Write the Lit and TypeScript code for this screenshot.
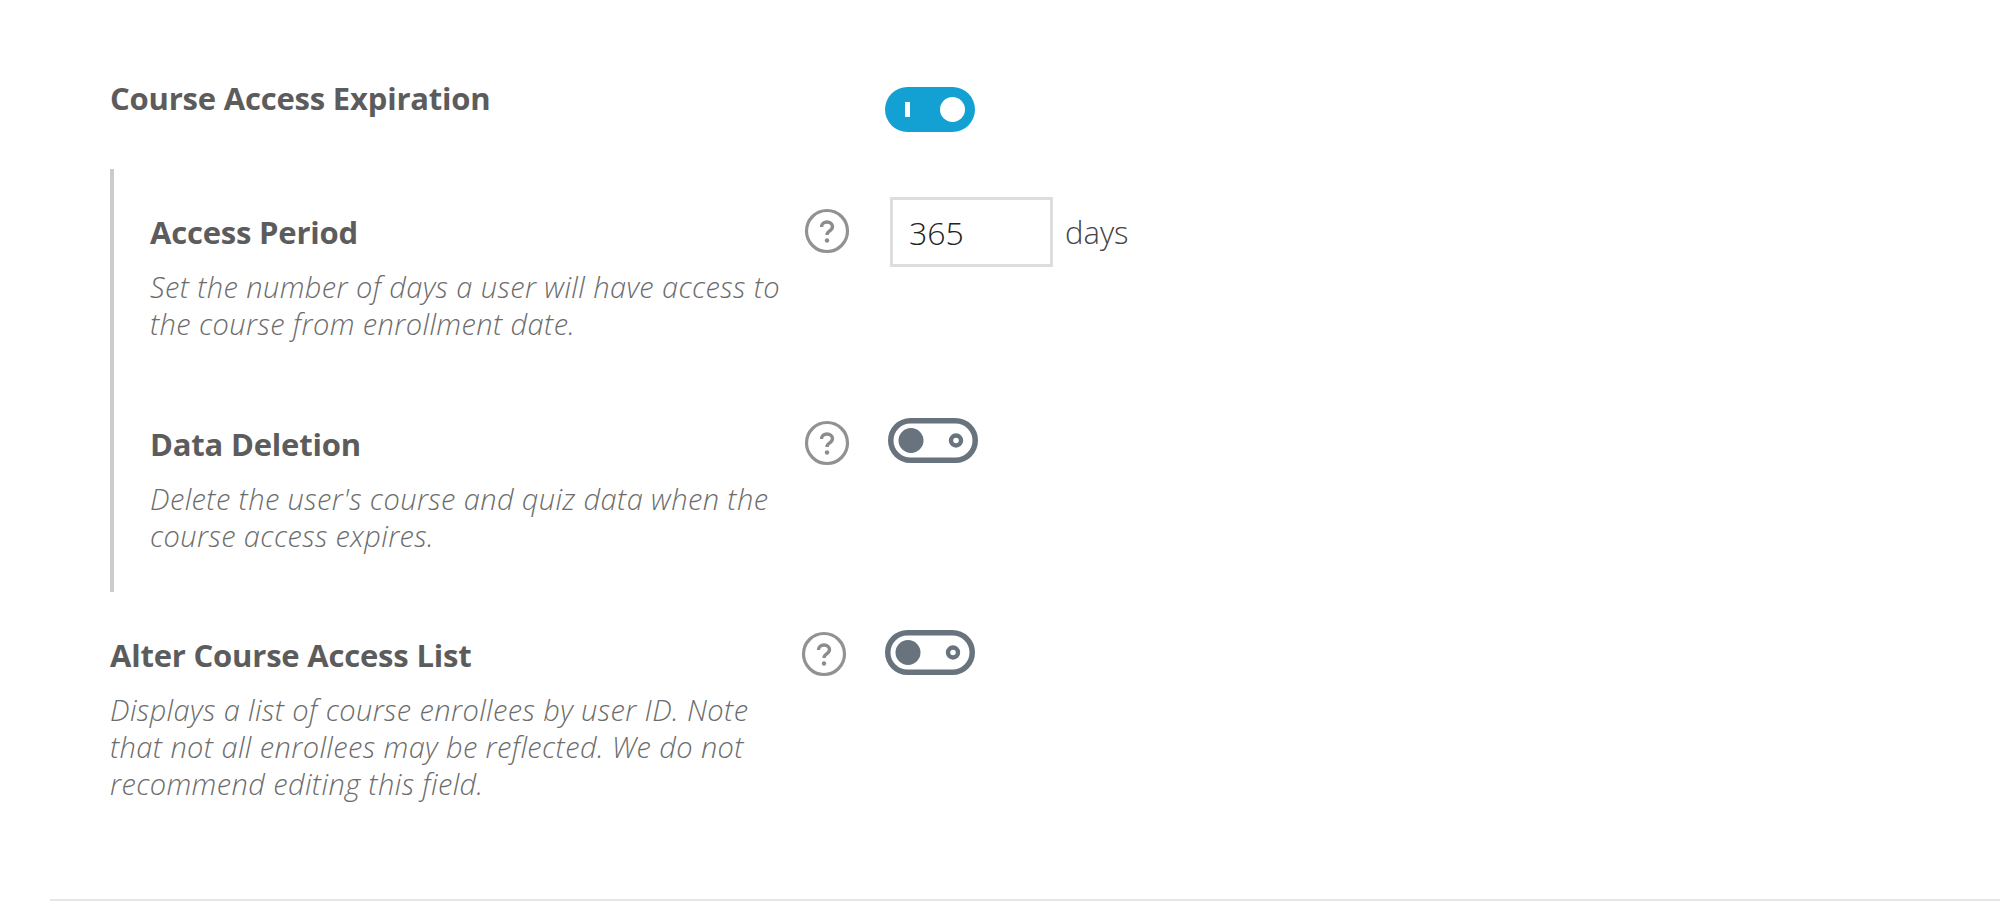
import {LitElement, css, html, nothing} from 'lit';
import {customElement} from 'lit/decorators.js';

const helpIcon = html`
  <svg class="help" viewBox="0 0 46 46" aria-hidden="true">
    <circle cx="23" cy="23" r="20.5" fill="none" stroke="#929292" stroke-width="3.2"></circle>
    <path d="M17.500 19c0-3.200 2.500-5 5.500-5s5.500 1.800 5.500 4.600c0 2.200-1.200 3.200-2.800 4.300-1.600 1.100-2.700 2.100-2.700 4.100" fill="none" stroke="#8c8c8c" stroke-width="3.4"></path>
    <circle cx="23" cy="32.500" r="2.200" fill="#8c8c8c"></circle>
  </svg>
`;

@customElement('app-root')
export class AppRoot extends LitElement {
  static styles = css`
    :host {
      display: block;
      width: 2000px;
      height: 901px;
      box-sizing: border-box;
      overflow: hidden;
      position: relative;
      background: #fff;
      font-family: 'Open Sans', sans-serif;
      color: #5c5c5c;
    }

    .settings {
      padding: 80px 0 0 110px;
    }

    .row {
      display: flex;
      align-items: flex-start;
    }

    .label {
      width: 697px;
      flex: none;
    }

    .title {
      margin: -1px 0 0;
      font-size: 31px;
      line-height: 38px;
      font-weight: 700;
      letter-spacing: -0.2px;
      color: #5c5c5c;
    }

    .desc {
      margin: 17px 0 0;
      font-size: 29px;
      line-height: 37px;
      font-style: italic;
      font-weight: 300;
      letter-spacing: 0.4px;
      color: #6c6c6c;
    }

    .top {
      height: 89px;
    }

    .top .toggle {
      margin: 7px 0 0 78px;
    }

    .panel {
      border-left: 4px solid #ccc;
      height: 423px;
      box-sizing: border-box;
      padding: 45px 0 0 36px;
    }

    .panel .label {
      width: 660px;
    }

    .access {
      height: 212px;
    }

    .help {
      width: 46px;
      height: 46px;
      flex: none;
      margin: -6px 0 0 -6px;
    }

    .toggle {
      width: 90px;
      height: 45px;
      flex: none;
      display: block;
    }

    .field {
      display: flex;
      align-items: center;
      margin: -8px 0 0 38px;
    }

    .access .field {
      margin-top: -17px;
    }

    .alter .field {
      margin-top: -7px;
    }

    .input {
      width: 163px;
      height: 70px;
      box-sizing: border-box;
      border: 3px solid #ddd;
      margin-left: 2px;
      padding: 0 16px;
      font-family: inherit;
      font-size: 32px;
      font-weight: 300;
      color: #222;
      background: #fff;
      outline: none;
    }

    .unit {
      margin-left: 12px;
      font-size: 31px;
      color: #444;
      font-weight: 300;
    }

    .alter {
      margin-top: 45px;
    }

    .rule {
      position: absolute;
      left: 50px;
      right: 0;
      top: 899px;
      height: 2px;
      background: #e6e6e6;
    }
  `;

  private toggle(on: boolean) {
    if (on) {
      return html`
        <svg class="toggle" viewBox="0 0 90 45" aria-hidden="true">
          <rect width="90" height="45" rx="22.500" fill="#13a1d3"></rect>
          <rect x="20" y="15" width="5" height="15" fill="#fff"></rect>
          <circle cx="67.500" cy="22.500" r="12.500" fill="#fff"></circle>
        </svg>
      `;
    }
    return html`
      <svg class="toggle" viewBox="0 0 90 45" aria-hidden="true">
        <rect x="2.750" y="2.750" width="84.500" height="39.500" rx="19.750" fill="#fff" stroke="#68737d" stroke-width="5.500"></rect>
        <circle cx="23" cy="22.500" r="12.500" fill="#68737d"></circle>
        <circle cx="68" cy="22.500" r="5" fill="#fff" stroke="#68737d" stroke-width="4.400"></circle>
      </svg>
    `;
  }

  private setting(title: string, lines: string[], control: unknown) {
    return html`
      <div class="row">
        <div class="label">
          <h3 class="title">${title}</h3>
          ${lines.length
            ? html`<p class="desc">${lines.map((l) => html`${l}<br />`)}</p>`
            : nothing}
        </div>
        ${control}
      </div>
    `;
  }

  render() {
    return html`
      <div class="settings">
        <div class="row top">
          <div class="label"><h3 class="title">Course Access Expiration</h3></div>
          ${this.toggle(true)}
        </div>
        <div class="panel">
          <div class="access">
            ${this.setting(
              'Access Period',
              ['Set the number of days a user will have access to', 'the course from enrollment date.'],
              html`${helpIcon}
                <div class="field">
                  <input class="input" type="text" value="365" />
                  <span class="unit">days</span>
                </div>`
            )}
          </div>
          ${this.setting(
            'Data Deletion',
            ["Delete the user's course and quiz data when the", 'course access expires.'],
            html`${helpIcon}<span class="field">${this.toggle(false)}</span>`
          )}
        </div>
        <div class="alter">
          ${this.setting(
            'Alter Course Access List',
            [
              'Displays a list of course enrollees by user ID. Note',
              'that not all enrollees may be reflected. We do not',
              'recommend editing this field.',
            ],
            html`${helpIcon}<span class="field">${this.toggle(false)}</span>`
          )}
        </div>
      </div>
      <div class="rule"></div>
    `;
  }
}
